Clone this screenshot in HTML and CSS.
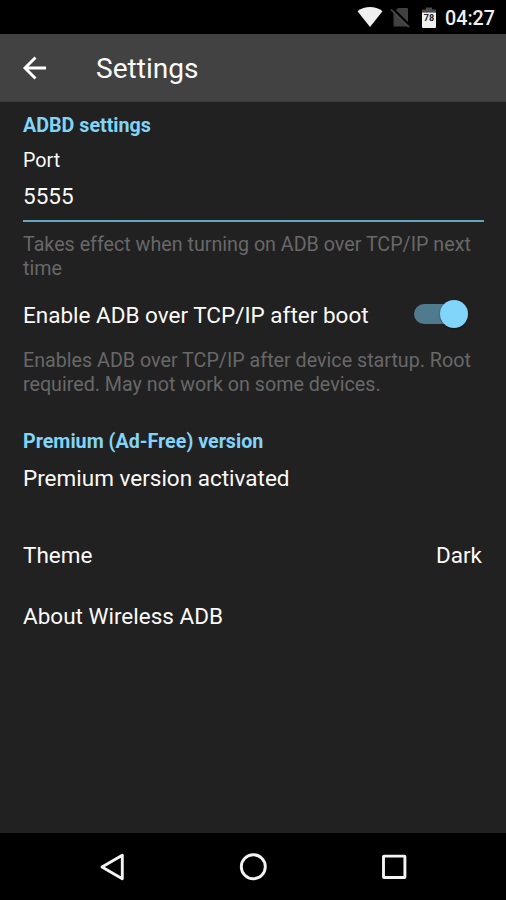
FILE: index.html
```html
<!DOCTYPE html>
<html lang="en">
<head>
<meta charset="utf-8">
<title>Settings</title>
<link rel="stylesheet" href="styles.css">
</head>
<body>
<div class="screen">
  <div class="status-bar">
    <svg class="status-icons" width="84" height="34" viewBox="0 0 84 34">
      <path d="M0.5 11.2C8 5.600 18 5.600 25.500 11.200L13 27z" fill="#f0f0f0"/>
      <path d="M41 8h9q1 0 1 1v17.500H36.500V12.500z" fill="#404040"/>
      <path d="M35.500 8.500L53.500 26.500" stroke="#000" stroke-width="2.500"/>
      <path d="M34 9.500L52 27" stroke="#4a4a4a" stroke-width="1.700"/>
      <path d="M69 7.500h6v2h4v3H65v-3h4z" fill="#4a4a4a"/>
      <path d="M65 12.500h14V27q0 1-1 1H66q-1 0-1-1z" fill="#f0f0f0"/>
      <text class="battery-level" x="72" y="20.500" text-anchor="middle">78</text>
    </svg>
    <span class="clock">04:27</span>
  </div>
  <header class="app-bar">
    <svg class="back" width="26" height="26" viewBox="0 0 26 26" fill="none" stroke="#fff" stroke-width="2.900">
      <path d="M25 13H3.500M14.500 2.500L4 13L14.500 23.500"/>
    </svg>
    <h1 class="title">Settings</h1>
  </header>
  <main class="content">
    <h2 class="section">ADBD settings</h2>
    <div class="label">Port</div>
    <div class="field">5555</div>
    <p class="hint">Takes effect when turning on ADB over TCP/IP next time</p>
    <div class="row boot">
      <span>Enable ADB over TCP/IP after boot</span>
      <span class="switch"><span class="thumb"></span></span>
    </div>
    <p class="hint">Enables ADB over TCP/IP after device startup. Root required. May not work on some devices.</p>
    <h2 class="section premium">Premium (Ad-Free) version</h2>
    <div class="row activated">Premium version activated</div>
    <div class="row theme"><span>Theme</span><span>Dark</span></div>
    <div class="row about">About Wireless ADB</div>
  </main>
  <nav class="nav-bar">
    <svg width="28" height="28" viewBox="0 0 28 28"><path d="M4 14L24.300 2.200V25.800z"/></svg>
    <svg width="28" height="28" viewBox="0 0 28 28"><circle cx="14.300" cy="13.800" r="12"/></svg>
    <svg width="28" height="28" viewBox="0 0 28 28"><rect x="3.500" y="3.100" width="21.400" height="21.400" rx=".5"/></svg>
  </nav>
</div>
</body>
</html>
```

FILE: styles.css
```css
* { box-sizing: border-box; }

body {
  margin: 0;
  background: #212121;
  color: #fafafa;
  font-family: Roboto, sans-serif;
}

h1, h2, p { margin: 0; }
svg { display: block; flex: none; }

.screen {
  display: flex;
  flex-direction: column;
  width: 506px;
  height: 900px;
  overflow: hidden;
}

.status-bar {
  display: flex;
  justify-content: flex-end;
  align-items: center;
  gap: 4px;
  flex: none;
  height: 34px;
  padding-right: 11px;
  background: #000;
}

.battery-level {
  font: 700 9px Roboto, sans-serif;
  fill: #222;
}

.clock {
  padding-top: 4px;
  color: #f0f0f0;
  font-size: 19.700px;
  font-weight: 500;
  line-height: 24px;
}

.app-bar {
  display: flex;
  align-items: center;
  flex: none;
  height: 68px;
  padding-left: 21px;
  background: #424242;
  border-bottom: 1px solid #393939;
}

.title {
  margin-left: 49px;
  padding-top: 2px;
  font-size: 28.100px;
  font-weight: 400;
  line-height: 34px;
}

.content {
  flex: 1;
  padding: 12px 22px 0 23px;
}

.section {
  color: #81d4fa;
  font-size: 19.700px;
  font-weight: 700;
  line-height: 24px;
}

.label {
  margin-top: 11px;
  font-size: 19.700px;
  line-height: 24px;
}

.field {
  height: 49px;
  padding-top: 9px;
  border-bottom: 2px solid #66a5c0;
  font-size: 22.500px;
  line-height: 28px;
}

.hint {
  margin-top: 11px;
  color: #686868;
  font-size: 19.700px;
  line-height: 24px;
}

.row {
  display: flex;
  justify-content: space-between;
  align-items: center;
  height: 28px;
  padding-right: 2px;
  font-size: 22.500px;
  line-height: 28px;
}

.boot {
  margin: 20px 0;
  padding-right: 16px;
}

.switch {
  display: flex;
  justify-content: flex-end;
  align-items: center;
  width: 54px;
  height: 20px;
  margin-bottom: 2px;
  border-radius: 10px;
  background: #507a8e;
}

.thumb {
  flex: none;
  width: 28px;
  height: 28px;
  border-radius: 50%;
  background: #81d4fa;
  box-shadow: 0 1px 2px rgba(0, 0, 0, .4);
}

.premium { margin-top: 33px; }
.activated { margin-top: 10px; }
.theme { margin-top: 49px; }
.about { margin-top: 33px; }

.nav-bar {
  display: flex;
  justify-content: center;
  align-items: center;
  gap: 113px;
  flex: none;
  height: 67px;
  background: #000;
}

.nav-bar svg {
  fill: none;
  stroke: #f4f4f4;
  stroke-width: 2.900;
  stroke-linejoin: round;
}
```
